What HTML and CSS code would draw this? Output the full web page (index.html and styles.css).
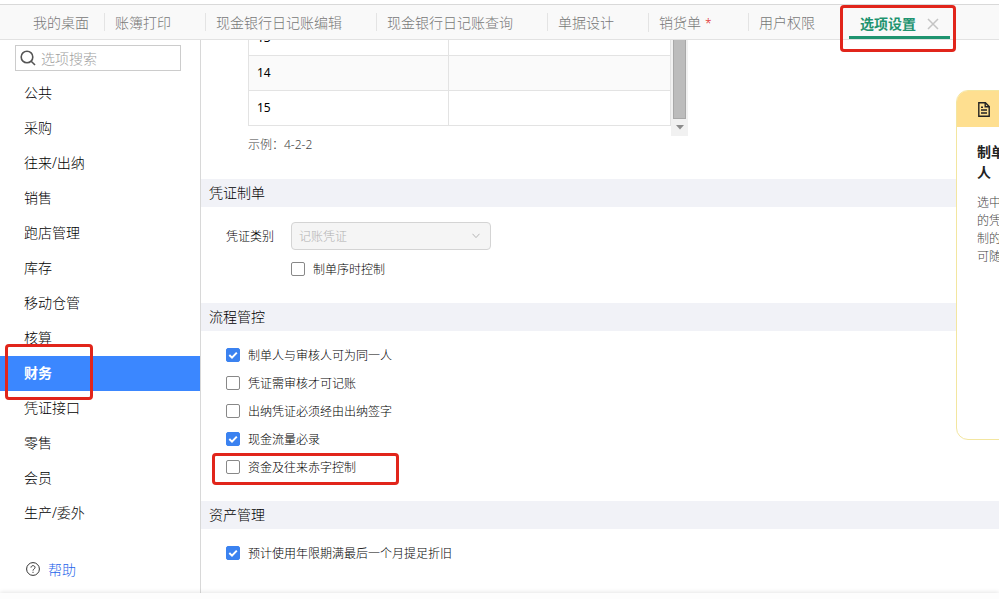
FILE: index.html
```
<!DOCTYPE html>
<html lang="zh-CN">
<head>
    <meta charset="UTF-8">
    <meta name="viewport" content="width=device-width, initial-scale=1.0">
    <title>选项设置</title>
    <link rel="stylesheet" href="styles.css">
</head>
<body>
    <nav class="tabs">
        <a class="tab tab-home" href="#">我的桌面</a>
        <a class="tab" href="#">账簿打印</a>
        <a class="tab" href="#">现金银行日记账编辑</a>
        <a class="tab" href="#">现金银行日记账查询</a>
        <a class="tab" href="#">单据设计</a>
        <a class="tab" href="#">销货单<span class="star">*</span></a>
        <a class="tab" href="#">用户权限</a>
        <div class="tab active">
            <a href="#">选项设置</a>
            <button class="close" type="button" aria-label="关闭">
                <svg width="12" height="12" viewBox="0 0 12 12"><path d="M1 1L11 11M11 1L1 11" stroke="#c4c4c4" stroke-width="1.5"/></svg>
            </button>
            <span class="mark mark-tab"></span>
        </div>
    </nav>

    <div class="page">
        <aside class="sidebar">
            <label class="search">
                <svg width="16" height="16" viewBox="0 0 16 16" fill="none" stroke="#555" stroke-width="1.6"><circle cx="7" cy="7" r="5.8"/><path d="M11.2 11.2L15 15"/></svg>
                <input type="text" placeholder="选项搜索" aria-label="选项搜索">
            </label>
            <ul class="menu">
                <li><a href="#">公共</a></li>
                <li><a href="#">采购</a></li>
                <li><a href="#">往来/出纳</a></li>
                <li><a href="#">销售</a></li>
                <li><a href="#">跑店管理</a></li>
                <li><a href="#">库存</a></li>
                <li><a href="#">移动仓管</a></li>
                <li><a href="#">核算</a></li>
                <li class="current"><a href="#">财务</a><span class="mark mark-menu"></span></li>
                <li><a href="#">凭证接口</a></li>
                <li><a href="#">零售</a></li>
                <li><a href="#">会员</a></li>
                <li><a href="#">生产/委外</a></li>
            </ul>
            <a class="help" href="#">
                <svg width="14" height="14" viewBox="0 0 14 14" fill="none" stroke="#333"><circle cx="7" cy="7" r="6.4"/><path d="M5 5.6C5 3 9 3 9 5.5C9 7 7 7 7 8.6"/><path d="M7 9.8V10.9"/></svg>
                帮助
            </a>
        </aside>

        <main class="content">
            <div class="grid">
                <div class="grid-view">
                    <table>
                        <tr><td>13</td><td></td></tr>
                        <tr class="even"><td>14</td><td></td></tr>
                        <tr><td>15</td><td></td></tr>
                    </table>
                </div>
                <div class="scrollbar">
                    <div class="thumb"></div>
                    <svg width="8" height="5" viewBox="0 0 8 5"><path d="M0 0H8L4 4.5Z" fill="#8c8c8c"/></svg>
                </div>
            </div>
            <p class="example">示例：4-2-2</p>

            <section>
                <h2>凭证制单</h2>
                <div class="fields form">
                    <div class="field">
                        <label for="type">凭证类别</label>
                        <div class="select">
                            <select id="type" disabled><option>记账凭证</option></select>
                            <svg width="8" height="6" viewBox="0 0 8 6" fill="none" stroke="#b5b5b5"><path d="M.5 .8L4 4.6L7.5 .8"/></svg>
                        </div>
                    </div>
                    <label class="check indent"><input type="checkbox">制单序时控制</label>
                </div>
            </section>

            <section>
                <h2>流程管控</h2>
                <div class="fields">
                    <label class="check"><input type="checkbox" checked>制单人与审核人可为同一人</label>
                    <label class="check"><input type="checkbox">凭证需审核才可记账</label>
                    <label class="check"><input type="checkbox">出纳凭证必须经由出纳签字</label>
                    <label class="check"><input type="checkbox" checked>现金流量必录</label>
                    <label class="check"><input type="checkbox">资金及往来赤字控制<span class="mark mark-check"></span></label>
                </div>
            </section>

            <section>
                <h2>资产管理</h2>
                <div class="fields">
                    <label class="check"><input type="checkbox" checked>预计使用年限期满最后一个月提足折旧</label>
                </div>
            </section>

            <div class="tip">
                <div class="tip-head">
                    <svg width="12" height="15" viewBox="0 0 12 15" fill="none" stroke="#222" stroke-width="1.4"><path d="M.8 .8H7.4L11.2 4.6V14.2H.8Z"/><path d="M7.2 .8V4.8H11.2M3 5.2H5M3 8H9M3 11H9"/></svg>
                </div>
                <div class="tip-body">
                    <h3>制单<br>人</h3>
                    <p>选中<br>的凭<br>制的<br>可随</p>
                </div>
            </div>
        </main>
    </div>
    <footer class="bottom"></footer>
</body>
</html>
```

FILE: styles.css
```
* {
    margin: 0;
    padding: 0;
    box-sizing: border-box;
}
body {
    display: flex;
    flex-direction: column;
    height: 100vh;
    padding-top: 4px;
    overflow: hidden;
    background: #fff;
    color: #000;
    font-family: "Noto Sans", "Noto Sans CJK SC", sans-serif;
    font-size: 14px;
    font-weight: 300;
}
a {
    color: inherit;
    text-decoration: none;
}
input, select, button {
    font: inherit;
}

/* tabs */
.tabs {
    display: flex;
    align-items: center;
    height: 36px;
    flex-shrink: 0;
    padding-left: 22px;
    background: #f9f9f9;
    border-top: 1px solid #d9d9d9;
    border-bottom: 1px solid #e2e2e2;
    color: #777;
    white-space: nowrap;
}
.tab {
    padding: 2px 34px 0 10px;
    border-left: 1px solid #e4e4e4;
    line-height: 16px;
}
.tab-home {
    padding-right: 15px;
    border-left-color: transparent;
}
.star {
    display: inline-block;
    width: 13px;
    padding-left: 4px;
    color: #e02020;
    font-size: 12px;
}
.tab.active {
    position: relative;
    z-index: 2;
    display: flex;
    align-items: center;
    gap: 11px;
    align-self: stretch;
    padding: 6px 11px 0;
    border-left: 0;
    border-bottom: 3px solid #1f9470;
    color: #1f9470;
    font-weight: 700;
}
.close {
    display: flex;
    border: 0;
    background: none;
    cursor: pointer;
}

/* red highlight frames */
.mark {
    position: absolute;
    border: 3px solid #e1251b;
    border-radius: 4px;
    pointer-events: none;
}
.mark-tab {
    inset: 0 -6px -16px -9px;
}
.mark-menu {
    top: -12px;
    bottom: -9px;
    left: 5px;
    width: 88px;
}
.mark-check {
    inset: 0 -43px -4px -14px;
}

.page {
    display: flex;
    flex: 1;
    min-height: 0;
}

/* left menu */
.sidebar {
    width: 201px;
    flex-shrink: 0;
    padding-top: 5px;
    border-right: 1px solid #d8d8d8;
}
.search {
    display: flex;
    align-items: center;
    gap: 5px;
    height: 26px;
    margin: 0 19px 5px 15px;
    padding-left: 4px;
    border: 1px solid #ccc;
}
.search input {
    width: 100%;
    min-width: 0;
    border: 0;
    outline: 0;
}
.search svg {
    flex-shrink: 0;
}
.search input::placeholder {
    color: #a0a0a0;
}
.menu {
    list-style: none;
}
.menu li {
    position: relative;
    height: 35px;
    padding-left: 24px;
    line-height: 33px;
}
.menu a {
    display: block;
}
.menu .current {
    z-index: 1;
    background: #3b87ff;
    color: #fff;
    font-weight: 700;
}
.help {
    display: flex;
    align-items: center;
    gap: 8px;
    margin-top: 28px;
    padding-left: 26px;
    color: #1f66ea;
}

/* settings */
.content {
    position: relative;
    flex: 1;
    overflow: hidden;
    font-size: 12px;
}
.grid {
    display: flex;
    width: 440px;
    height: 96px;
    margin-left: 47px;
}
.grid-view {
    display: flex;
    flex-direction: column;
    justify-content: flex-end;
    flex: 1;
    padding-bottom: 10px;
    overflow: hidden;
}
table {
    width: 100%;
    border-collapse: collapse;
    table-layout: fixed;
}
td {
    height: 35px;
    padding: 0 0 2px 8px;
    border: 1px solid #e3e3e3;
    font-weight: 400;
}
td:first-child {
    width: 200px;
}
.even {
    background: #fafafa;
}
.scrollbar {
    display: flex;
    flex-direction: column;
    align-items: center;
    justify-content: space-between;
    width: 17px;
    padding-bottom: 6px;
    background: #f1f1f1;
}
.thumb {
    width: 13px;
    height: 79px;
    background: #bcbcbc;
    border: 1px solid #a8a8a8;
    border-top: 0;
}
.example {
    height: 43px;
    padding-left: 47px;
    line-height: 18px;
    color: #444;
}
h2 {
    height: 28px;
    padding-left: 8px;
    background: #f1f2f7;
    font-size: 14px;
    font-weight: 300;
    line-height: 28px;
}
.fields {
    display: flex;
    flex-direction: column;
    align-items: flex-start;
    padding: 10px 25px 20px;
}
.form {
    padding-top: 15px;
    gap: 5px;
}
.field {
    display: flex;
    align-items: center;
    gap: 17px;
}
.select {
    position: relative;
    width: 200px;
}
.select select {
    display: block;
    width: 100%;
    height: 28px;
    padding-left: 7px;
    appearance: none;
    background: #f5f5f5;
    border: 1px solid #d4d4d4;
    border-radius: 4px;
    color: #b0b0b0;
    opacity: 1;
}
.select svg {
    position: absolute;
    top: 11px;
    right: 11px;
}
.check {
    position: relative;
    display: flex;
    align-items: center;
    gap: 8px;
    height: 28px;
}
.indent {
    margin-left: 65px;
}
.check input {
    width: 14px;
    height: 14px;
    appearance: none;
    background: #fff;
    border: 1px solid #888;
    border-radius: 2px;
}
.check input:checked {
    border-color: #3b82f0;
    background: #3b82f0 url("data:image/svg+xml,%3Csvg xmlns='http://www.w3.org/2000/svg' viewBox='0 0 12 12'%3E%3Cpath d='M2.3 6L5 8.6L9.8 3.6' fill='none' stroke='white' stroke-width='2'/%3E%3C/svg%3E") center / 12px no-repeat;
}

/* help card */
.tip {
    position: absolute;
    top: 50px;
    right: -157px;
    width: 200px;
    height: 350px;
    overflow: hidden;
    background: #fff;
    border: 1px solid #f3e6a0;
    border-radius: 12px;
}
.tip-head {
    display: flex;
    align-items: center;
    height: 36px;
    padding-left: 21px;
    background: #fedf90;
}
.tip-body {
    padding: 15px 20px;
}
.tip h3 {
    margin-bottom: 12px;
    color: #222;
    font-size: 14px;
    line-height: 20px;
}
.tip p {
    line-height: 18px;
    color: #444;
}

.bottom {
    height: 6px;
    flex-shrink: 0;
    background: #fdfdfd;
    box-shadow: 0 -1px 4px rgba(0, 0, 0, .1);
}
```
